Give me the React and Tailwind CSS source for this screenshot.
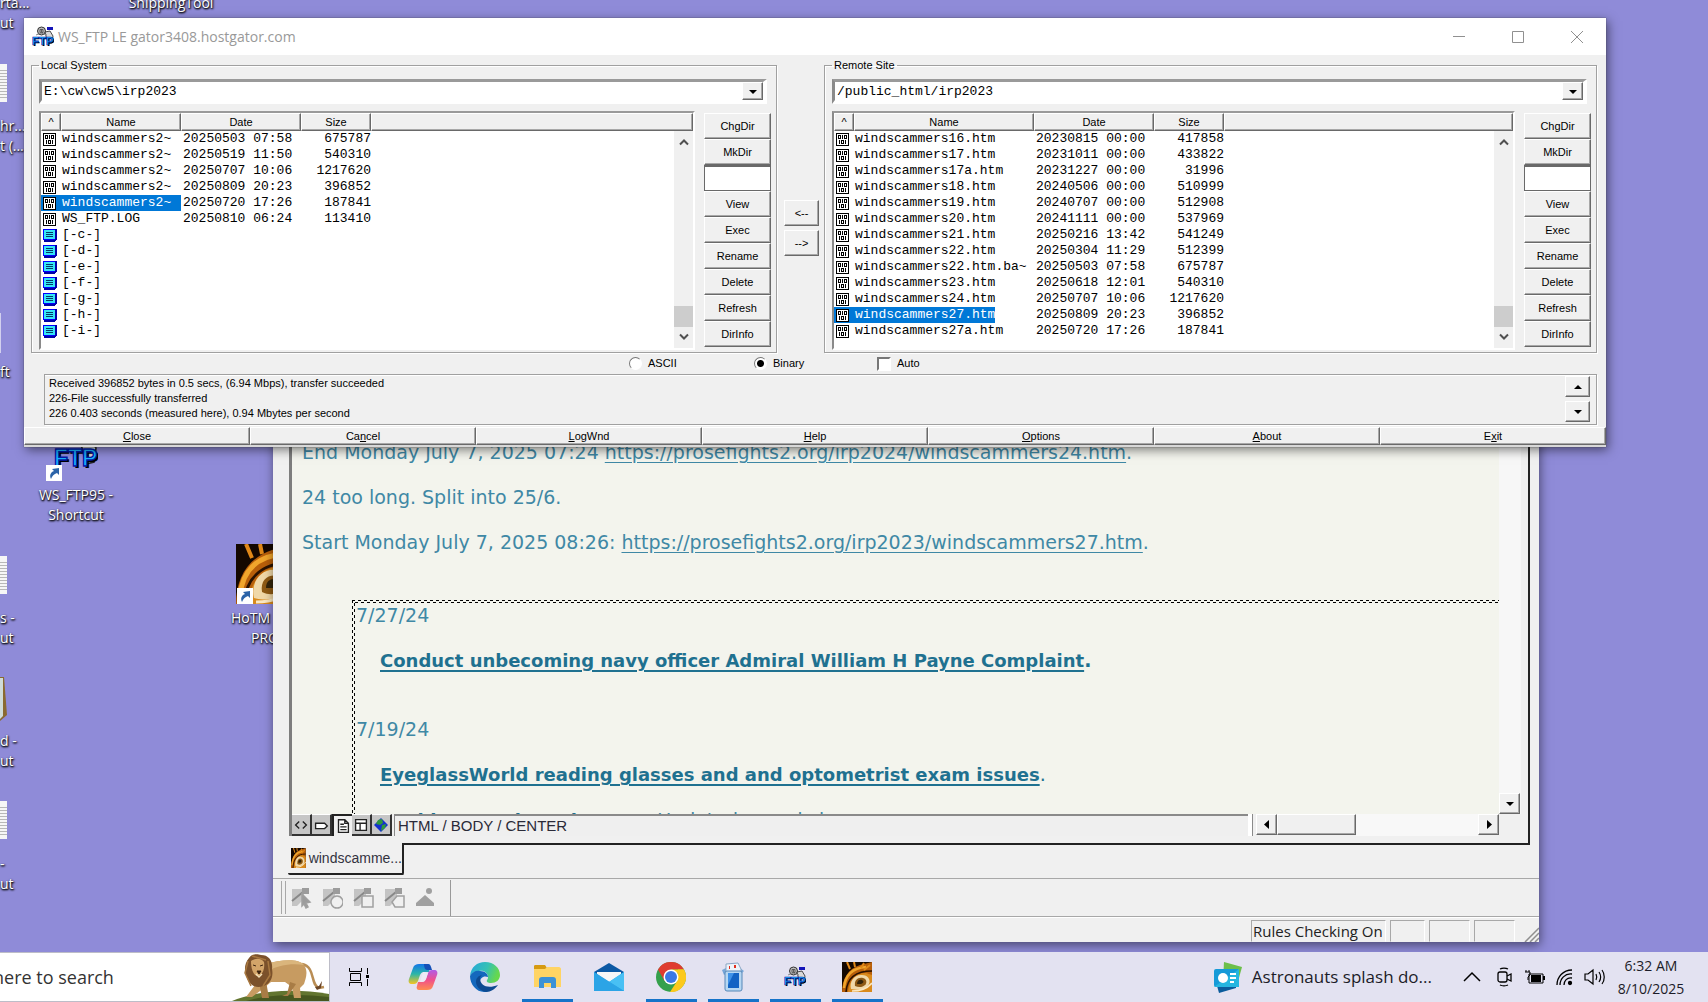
import React from "react";

const ui = "font-['Liberation_Sans',sans-serif] text-[11px] leading-[13px] text-black";
const raised =
  "bg-[#f0f0f0] border border-t-white border-l-white border-r-[#696969] border-b-[#696969]";
const raisedDeep = raised + " shadow-[inset_-1px_-1px_0_#a8a8a8]";

const LOCAL = [
  ["windscammers2~", "20250503 07:58", "675787"],
  ["windscammers2~", "20250519 11:50", "540310"],
  ["windscammers2~", "20250707 10:06", "1217620"],
  ["windscammers2~", "20250809 20:23", "396852"],
  ["windscammers2~", "20250720 17:26", "187841", "full"],
  ["WS_FTP.LOG", "20250810 06:24", "113410"],
  ...["c", "d", "e", "f", "g", "h", "i"].map((d) => [`[-${d}-]`, "", "", "", "drive"]),
];

const REMOTE = [
  ["windscammers16.htm", "20230815 00:00", "417858"],
  ["windscammers17.htm", "20231011 00:00", "433822"],
  ["windscammers17a.htm", "20231227 00:00", "31996"],
  ["windscammers18.htm", "20240506 00:00", "510999"],
  ["windscammers19.htm", "20240707 00:00", "512908"],
  ["windscammers20.htm", "20241111 00:00", "537969"],
  ["windscammers21.htm", "20250216 13:42", "541249"],
  ["windscammers22.htm", "20250304 11:29", "512399"],
  ["windscammers22.htm.ba~", "20250503 07:58", "675787"],
  ["windscammers23.htm", "20250618 12:01", "540310"],
  ["windscammers24.htm", "20250707 10:06", "1217620"],
  ["windscammers27.htm", "20250809 20:23", "396852", "text"],
  ["windscammers27a.htm", "20250720 17:26", "187841"],
];

function FtpLogo({ className }) {
  return (
    <svg className={className} viewBox="0 0 22 22" aria-hidden="true">
      <circle cx="9.500" cy="5" r="4" fill="#b9b9b9" stroke="#333" />
      <path d="M8 3.500h3v3H8zM9.500 3.500v3" fill="none" stroke="#444" strokeWidth=".8" />
      <path d="M15 1h6v3h-6z" fill="#1414b8" />
      <path d="M13 6l5-1 3 5-1 7-4 1z" fill="#d8d8d8" stroke="#222" strokeWidth=".8" />
      <path d="M4 9l5-2 6 2" stroke="#888" fill="none" />
      <text x="1" y="20" fontFamily="Liberation Sans" fontWeight="700" fontSize="11.500" fill="#000">FTP</text>
      <text x="0" y="19" fontFamily="Liberation Sans" fontWeight="700" fontSize="11.500" fill="#19b4ff" stroke="#0018a8" strokeWidth=".7">FTP</text>
    </svg>
  );
}

function Tiger({ className }) {
  return (
    <svg className={className} viewBox="0 0 30 30" preserveAspectRatio="none" aria-hidden="true">
      <rect width="30" height="30" fill="#140800" />
      <path d="M0 30C0 17 6 7 18 3L30 0v30z" fill="#b85f0a" />
      <path d="M2 26C3 14 10 6 24 5" fill="none" stroke="#f0a52c" strokeWidth="2.500" />
      <path d="M4 30C5 17 12 9 30 9" fill="none" stroke="#2a1200" strokeWidth="1.500" />
      <path d="M6 30C7 19 13 11 24 11l6 2v17z" fill="#d98a1c" />
      <path d="M9 27c-2-8 4-15 11-14 6 0 9 5 7 9-2 5-10 7-18 5z" fill="#f0d8a8" />
      <path d="M13 24c-1-6 3-9 8-8 4 1 4 5 2 7-2 2-6 3-10 1z" fill="#8f5a14" />
      <path d="M15 22c0-4 3-5 5-4 2 1 2 3-1 4z" fill="#33240a" />
      <path d="M5 0l3 7M12 0l1 5M22 1l-3 5M28 3l-6 5" stroke="#e08818" strokeWidth="2" />
      <path d="M10 29c8 0 15-2 20-8" stroke="#fbe9c2" strokeWidth="1.500" fill="none" />
    </svg>
  );
}

function BinaryIcon() {
  return (
    <svg className="block h-[13px] w-[13px]" viewBox="0 0 13 13" shapeRendering="crispEdges" aria-hidden="true">
      <rect x=".5" y=".5" width="12" height="12" fill="#fff" stroke="#000" />
      <path d="M2 2h3v4H2zM8 2h3v4H8z" fill="#000" />
      <path d="M3 3h1v2H3zM9 3h1v2H9z" fill="#fff" />
      <path d="M6 2h1v4H6zM3 7h1v4H3zM9 7h1v4H9zM5 7h3v4H5z" fill="#000" />
      <path d="M6 8h1v2H6z" fill="#fff" />
    </svg>
  );
}

function DriveIcon() {
  return (
    <svg className="block h-[13px] w-[14px]" viewBox="0 0 14 13" shapeRendering="crispEdges" aria-hidden="true">
      <path d="M1 2l2-2h11v10l-2 3H1z" fill="#0000a8" />
      <rect x="0" y="0" width="12" height="11" fill="#0000ff" />
      <rect x="1" y="1" width="11" height="9" fill="#35e6f6" />
      <path d="M3 3h7v1H3zM3 5h7v1H3zM3 7h7v1H3z" fill="#003a6a" />
    </svg>
  );
}

function Tri({ dir }) {
  const d = { down: "M1 3h8L5 7z", up: "M1 7h8L5 3z", left: "M7 0v9L2 4.500z", right: "M3 0v9L8 4.500z" }[dir];
  return (
    <svg className="block h-[9px] w-[9px]" viewBox="0 0 9 9" aria-hidden="true">
      <path d={d} fill="#000" />
    </svg>
  );
}

function ScrollChevron({ up }) {
  return (
    <svg className="block h-[8px] w-[12px]" viewBox="0 0 12 8" aria-hidden="true">
      <path d={up ? "M2 6.500l4-4 4 4" : "M2 1.500l4 4 4-4"} fill="none" stroke="#505050" strokeWidth="2" />
    </svg>
  );
}

function FileList({ rows, label, nameCol }) {
  const th = raised + " h-[18px] p-0 text-center align-middle font-normal shadow-[inset_-1px_-1px_0_#a8a8a8]";
  return (
    <div className="relative min-w-0 flex-1 border-2 border-t-[#9a9a9a] border-l-[#8a8a8a] border-r-white border-b-white bg-white pb-[9px]">
      <table aria-label={label} className="w-full table-fixed border-separate border-spacing-0">
        <colgroup>
          <col className="w-[20px]" />
          <col className={nameCol} />
          <col className="w-[120px]" />
          <col className="w-[70px]" />
          <col />
        </colgroup>
        <thead className={ui}>
          <tr>
            <th className={th}>^</th>
            <th className={th}>Name</th>
            <th className={th}>Date</th>
            <th className={th}>Size</th>
            <th className={th} aria-label="Blank" />
          </tr>
        </thead>
        <tbody className="font-['Liberation_Mono',monospace] text-[13px] leading-[16px] text-black">
          {rows.map(([name, date, size, sel, kind], i) => (
            <tr key={i} className="h-[16px] whitespace-nowrap">
              <td className={"py-0 pl-[2px] pr-0 " + (sel ? "bg-[#0078d7]" : "")}>
                {kind ? <DriveIcon /> : <BinaryIcon />}
              </td>
              <td className={"p-0 " + (sel === "full" ? "bg-[#0078d7] text-white" : "")}>
                <span className={sel === "text" ? "block w-fit bg-[#0078d7] pl-px text-white" : "block pl-px"}>{name}</span>
              </td>
              <td className="py-0 pl-[2px] pr-0">{date}</td>
              <td className="p-0 text-right">{size}</td>
              <td className="p-0" />
            </tr>
          ))}
        </tbody>
      </table>
      <div className="absolute top-[18px] right-0 bottom-0 flex w-[19px] flex-col items-center justify-between bg-[#f0f0f0] pt-[7px] pb-[7px]">
        <ScrollChevron up />
        <div className="mt-auto mb-[6px] h-[21px] w-full bg-[#cdcdcd]" />
        <ScrollChevron />
      </div>
    </div>
  );
}

function Site({ title, path, rows, nameCol }) {
  const btn = raisedDeep + " h-[26px] w-full";
  return (
    <fieldset className="min-w-0 border border-[#a0a0a0] px-[7px] pb-[2px] shadow-[1px_1px_0_#fff,inset_1px_1px_0_#fff]">
      <legend className="px-[2px] leading-[14px]">{title}</legend>
      <div className="relative mt-[7px] mr-[2px] border-t-[3px] border-r-[4px] border-b-[4px] border-l-[3px] border-t-[#9a9a9a] border-r-white border-b-white border-l-[#8a8a8a] bg-white">
        <select
          aria-label={title + " directory"}
          className="block h-[18px] w-full appearance-none bg-transparent pt-px pl-[2px] font-['Liberation_Mono',monospace] text-[13px] leading-[17px] text-black"
        >
          <option>{path}</option>
        </select>
        <span className={raisedDeep + " pointer-events-none absolute top-0 right-0 flex h-[18px] w-[21px] items-center justify-center"}>
          <Tri dir="down" />
        </span>
      </div>
      <div className="mt-[7px] flex items-start gap-[9px]">
        <FileList rows={rows} label={title + " files"} nameCol={nameCol} />
        <div className="mr-[-2px] mt-[2px] flex w-[67px] flex-col">
          <button className={btn}>ChgDir</button>
          <button className={btn}>MkDir</button>
          <input
            aria-label={title + " file mask"}
            className="h-[26px] w-full border border-t-2 border-[#696969] bg-white px-1"
          />
          {["View", "Exec", "Rename", "Delete", "Refresh", "DirInfo"].map((b) => (
            <button key={b} className={btn}>{b}</button>
          ))}
        </div>
      </div>
    </fieldset>
  );
}

function FtpWindow() {
  const radio =
    "size-[13px] appearance-none rounded-full border border-t-[#777] border-l-[#777] border-r-white border-b-white bg-white checked:bg-[radial-gradient(circle,#000_0_3px,#fff_4px)]";
  return (
    <section
      aria-label="WS_FTP LE"
      className={ui + " absolute top-[18px] right-[102px] left-[24px] bg-[#f0f0f0] shadow-[0_0_1px_#444,2px_3px_10px_rgba(0,0,0,0.5)]"}
    >
      <header className="flex h-[37px] items-center bg-white pl-[8px]">
        <FtpLogo className="size-[22px]" />
        <h1 className="ml-[4px] font-['Open_Sans',sans-serif] text-[14px] leading-[20px] text-[#999]">
          WS_FTP LE gator3408.hostgator.com
        </h1>
        <div className="ml-auto flex">
          {["M2 7.500h12", "M2.500 2.500h11v11h-11z", "M2 2l12 12M14 2L2 14"].map((d, i) => (
            <button key={d} aria-label={["Minimize", "Maximize", "Close window"][i]} className="flex h-[36px] w-[59px] items-center justify-center">
              <svg className="size-[16px]" viewBox="0 0 16 16" aria-hidden="true">
                <path d={d} fill="none" stroke="#909090" />
              </svg>
            </button>
          ))}
        </div>
      </header>

      <div className="grid grid-cols-[746fr_47px_773fr] pt-[3px] pr-[9px] pl-[7px]">
        <Site title="Local System" path="E:\cw\cw5\irp2023" rows={LOCAL} nameCol="w-[120px]" />
        <div className="flex flex-col gap-[4px] pt-[142px] pr-[5px] pl-[7px]">
          <button aria-label="Download" className={raisedDeep + " h-[26px]"}>&lt;--</button>
          <button aria-label="Upload" className={raisedDeep + " h-[26px]"}>--&gt;</button>
        </div>
        <Site title="Remote Site" path="/public_html/irp2023" rows={REMOTE} nameCol="w-[180px]" />
      </div>

      <div className="flex h-[21px] items-center pl-[605px]">
        <label className="flex w-[125px] items-center gap-[6px]">
          <input type="radio" name="mode" className={radio} />
          ASCII
        </label>
        <label className="flex w-[123px] items-center gap-[6px]">
          <input type="radio" name="mode" defaultChecked className={radio} />
          Binary
        </label>
        <label className="flex items-center gap-[6px]">
          <input
            type="checkbox"
            className="size-[14px] appearance-none border-2 border-t-[#777] border-l-[#777] border-r-white border-b-white bg-white"
          />
          Auto
        </label>
      </div>

      <div className="mr-[9px] ml-[20px] flex justify-between border border-[#a0a0a0] shadow-[inset_0_1px_0_#fff,1px_1px_0_#fff]">
        <div role="log" className="pt-px pb-[3px] pl-[4px] leading-[15px]">
          <p>Received 396852 bytes in 0.5 secs, (6.94 Mbps), transfer succeeded</p>
          <p>226-File successfully transferred</p>
          <p>226 0.403 seconds (measured here), 0.94 Mbytes per second</p>
        </div>
        <div className="flex flex-col gap-[4px] pt-px pr-[6px]">
          <button aria-label="Scroll up" className={raisedDeep + " flex h-[21px] w-[25px] items-center justify-center"}><Tri dir="up" /></button>
          <button aria-label="Scroll down" className={raisedDeep + " flex h-[21px] w-[25px] items-center justify-center"}><Tri dir="down" /></button>
        </div>
      </div>

      <div className="mt-[2px] grid grid-cols-7 border-b-2 border-[#d8d8d8]">
        {[["", "C", "lose"], ["Ca", "n", "cel"], ["", "L", "ogWnd"], ["", "H", "elp"], ["", "O", "ptions"], ["", "A", "bout"], ["E", "x", "it"]].map(([a, k, b]) => (
          <button key={a + k + b} className={raisedDeep + " h-[18px]"}>
            {a}<u>{k}</u>{b}
          </button>
        ))}
      </div>
    </section>
  );
}

const VIEWS = [
  ["Source", "M7 6l-4 4 4 4M11 6l4 4-4 4"],
  ["Tags", "M3 8h10l3 3-3 3H3z"],
  ["Page", "M4 3h7l4 4v10H4zM11 3v4h4M6 8h4M6 11h7M6 14h7"],
  ["Frames", "M3 4h12v12H3zM3 8h12M8 8v8"],
];

function EditorWindow() {
  const cell = "h-[22px] border border-t-[#a8a8a8] border-l-[#a8a8a8] border-r-white border-b-transparent";
  const sb = raisedDeep + " flex h-[21px] w-[21px] shrink-0 items-center justify-center";
  const link = "text-[18px] font-bold underline decoration-2 underline-offset-[3px]";
  return (
    <section
      aria-label="HTML editor"
      className="absolute right-[169px] bottom-[60px] left-[273px] flex h-[522px] flex-col bg-[#f0f0f0] shadow-[1px_3px_10px_rgba(0,0,0,0.5)]"
    >
      <div className="mr-[9px] ml-[16px] flex min-h-0 flex-1 flex-col border-r-2 border-b-2 border-[#222] pr-[7px] pb-[7px]">
        <div className="flex min-h-0 flex-1 border-l-[3px] border-[#7d7d7d]">
          <div className="min-w-0 flex-1 overflow-hidden bg-[#f3f4ed] pl-[10px] font-['DejaVu_Sans',sans-serif] text-[19px] leading-[24px] whitespace-nowrap text-[#3f88a5]">
            <p className="mt-[20px]">
              End Monday July 7, 2025 07:24{" "}
              <a href="#24" className="underline underline-offset-[3px]">https://prosefights2.org/irp2024/windscammers24.htm</a>.
            </p>
            <p className="mt-[21px]">24 too long. Split into 25/6.</p>
            <p className="mt-[21px]">
              Start Monday July 7, 2025 08:26:{" "}
              <a href="#27" className="underline underline-offset-[3px]">https://prosefights2.org/irp2023/windscammers27.htm</a>.
            </p>
            <div className="mt-[46px] ml-[50px] pt-[3px] pl-[4px] [background:linear-gradient(90deg,#000_50%,transparent_50%)_0_0/6px_1px_repeat-x,linear-gradient(90deg,#000_50%,transparent_50%)_3px_2px/6px_1px_repeat-x,linear-gradient(#000_50%,transparent_50%)_0_0/1px_6px_repeat-y,linear-gradient(#000_50%,transparent_50%)_2px_3px/1px_6px_repeat-y]">
              <p>7/27/24</p>
              <p className="mt-[21px] ml-[24px] font-bold text-[#1f7190]">
                <a href="#payne" className={link}>Conduct unbecoming navy officer Admiral William H Payne Complaint</a>.
              </p>
              <p className="mt-[44px]">7/19/24</p>
              <p className="mt-[21px] ml-[24px] text-[#1f7190]">
                <a href="#eyeglass" className={link}>EyeglassWorld reading glasses and and optometrist exam issues</a>.
              </p>
              <p className="mt-[21px] ml-[24px]">
                <b className="text-[18px] text-[#1f7190]">Usable to update changes.</b> Updated award changes.
              </p>
            </div>
          </div>
          <div className="flex w-[22px] flex-col justify-end bg-[#f7f7f7]">
            <button aria-label="Scroll down" className={sb}><Tri dir="down" /></button>
          </div>
        </div>
        <div className="flex h-[22px] shrink-0 items-stretch border-l-[3px] border-[#7d7d7d]">
          {VIEWS.map(([name, d], i) => (
            <button
              key={name}
              aria-label={name}
              className={
                i === 2
                  ? "flex w-[20px] items-center justify-center border-t-2 border-l-2 border-[#222] bg-[#f0f0f0]"
                  : "flex w-[20px] items-center justify-center border-t border-r-2 border-b-2 border-t-white border-r-[#333] border-b-[#333] bg-[#c6c6c6]"
              }
            >
              <svg className="size-[18px]" viewBox="0 0 18 20" aria-hidden="true">
                <path d={d} fill={i ? "#fff" : "none"} stroke="#222" strokeWidth="1.500" />
              </svg>
            </button>
          ))}
          <button aria-label="Preview" className="flex w-[20px] items-center justify-center border-t border-r-2 border-b-2 border-t-white border-r-[#333] border-b-[#333] bg-[#c6c6c6]">
            <svg className="size-[14px]" viewBox="0 0 14 14" aria-hidden="true">
              <path d="M7 0l7 7-7 7-7-7z" fill="#1431d0" />
              <path d="M4 2l4-1 1 4-3 2-4-1zM8 7l4-1-1 4-4 3z" fill="#2f9a3c" />
            </svg>
          </button>
          <div className="ml-[2px] flex-1 border-t-2 border-l border-[#8a8a8a] bg-[#efefef] pl-[3px] font-['Liberation_Sans',sans-serif] text-[15px] leading-[20px] text-[#2a2a38]">
            HTML / BODY / CENTER
          </div>
          <div className="mr-[3px] w-[5px] border-r border-[#8a8a8a] bg-white" />
          <button aria-label="Scroll left" className={sb}><Tri dir="left" /></button>
          <div className={raisedDeep + " h-[21px] w-[79px]"} />
          <div className="w-[122px] bg-[#f8f8f8]" />
          <button aria-label="Scroll right" className={sb}><Tri dir="right" /></button>
          <div className="w-[22px]" />
        </div>
      </div>

      <div className="flex h-[34px] shrink-0 items-start border-b border-[#a8a8a8] pl-[15px]">
        <button className="mt-[-2px] flex h-[32px] w-[116px] items-center gap-[3px] rounded-b-[2px] border-r-2 border-b-2 border-[#222] bg-[#f0f0f0] pl-[3px] font-['Liberation_Sans',sans-serif] text-[14px] leading-[16px] text-[#33333f]">
          <Tiger className="size-[20px]" />
          windscamme...
        </button>
      </div>
      <div className="flex h-[38px] shrink-0 items-center border-b border-[#a8a8a8] pl-[5px]">
        <div className="h-[33px] w-[4px] border-r border-[#a8a8a8]" />
        <div className="mr-[5px] h-[33px] w-[4px] border-r border-[#a8a8a8]" />
        {[
          ["Select", "M11 7l8 8-4 1 2 4-2 1-2-4-2 2z"],
          ["Circle", "M15 9a6 6 0 1 0 .01 0z"],
          ["Rectangle", "M9 9h11v11H9z"],
          ["Polygon", "M13 9h7v11H11l-3-5z"],
        ].map(([n, d], i) => (
          <button key={n} aria-label={n} disabled className="mr-[10px] h-[22px] w-[21px]">
            <svg viewBox="0 0 21 22" aria-hidden="true">
              <path d="M1 2h12v10L6 19H1z" fill="#c4c4c4" />
              <path d="M1 14L12 5" stroke="#888" strokeWidth="2" />
              <rect x="11" y="1" width="7" height="6" fill="#9c9c9c" />
              <path d={d} fill={i ? "#f0f0f0" : "#9c9c9c"} stroke="#a0a0a0" strokeWidth="1.500" />
            </svg>
          </button>
        ))}
        <button aria-label="Image" disabled className="mr-[14px] h-[22px] w-[21px]">
          <svg viewBox="0 0 21 22" aria-hidden="true">
            <circle cx="14" cy="4" r="3" fill="#a0a0a0" />
            <path d="M1 16l9-8 9 8v3H1z" fill="#a0a0a0" />
          </svg>
        </button>
        <div className="h-[36px] w-px bg-[#999]" />
      </div>
      <footer className="flex h-[25px] shrink-0 items-end justify-end gap-[4px] border-t border-white">
        <span className={cell + " w-[135px] pl-px font-['Open_Sans',sans-serif] text-[15px] leading-[20px] text-[#222]"}>Rules Checking On</span>
        <span className={cell + " w-[35px]"} />
        <span className={cell + " w-[41px]"} />
        <span className={cell + " w-[41px]"} />
        <svg className="ml-[5px] size-[15px]" viewBox="0 0 15 15" aria-hidden="true">
          <path d="M1 15L15 1M6 15l9-9M11 15l4-4" stroke="#8f8f8f" strokeWidth="1.500" />
        </svg>
      </footer>
    </section>
  );
}

function Lion() {
  return (
    <svg className="h-[48px] w-[97px]" viewBox="0 0 97 48" aria-hidden="true">
      <path d="M0 48c20-9 58-14 97-7v7z" fill="#62752f" />
      <path d="M14 48c20-6 50-8 83-4v4z" fill="#46571f" />
      <path d="M70 11c14 3 8 21 17 24l5-1" fill="none" stroke="#b98d54" strokeWidth="2.500" />
      <path d="M83 34l4-1 3-5-1 7-4 2z" fill="#6b4526" />
      <path d="M34 11c14-4 32-6 38 1 5 7 1 15 0 19l-4 4 1 10h-7l-2-11-7-5-14 0-7 6-12 9h-6l9-12z" fill="#c79b61" />
      <path d="M58 29l-3 12-5 2h6l8-12zM34 28l3 17h-7l-3-16z" fill="#a87c45" />
      <path d="M34 11c14-4 32-6 38 1-12-2-26 0-36 6z" fill="#dab57c" />
      <path d="M17 5c3-5 9-4 12-3 8 0 12 6 11 14 2 9-3 16-9 17-8 3-14-2-16-8-3-7-3-14 2-20z" fill="#7b512b" />
      <path d="M16 8l-3 12 6 13M36 8l2 14-7 11M20 3l14 4" fill="none" stroke="#a87840" strokeWidth="1.500" />
      <path d="M19 8c4-3 10-3 13 1 1 6-1 12-5 14-5 1-8-6-8-15z" fill="#d3a569" />
      <path d="M21 12l3 1M28 13l3-1M25 18h4l-2 3z" stroke="#3d2411" fill="#3d2411" />
      <path d="M24 21l3 3 3-3" stroke="#f4e2bc" strokeWidth="1.500" fill="none" />
    </svg>
  );
}

const APPS = [
  ["Copilot", false, (
    <svg viewBox="0 0 30 30">
      <defs>
        <linearGradient id="ca" x1="0" y1="0" x2="0" y2="1"><stop offset="0" stopColor="#1476e8" /><stop offset=".5" stopColor="#2bb6a8" /><stop offset="1" stopColor="#f5c520" /></linearGradient>
        <linearGradient id="cb" x1="0" y1="0" x2="0" y2="1"><stop offset="0" stopColor="#b05be8" /><stop offset=".5" stopColor="#f0508c" /><stop offset="1" stopColor="#ff8c50" /></linearGradient>
      </defs>
      <path d="M11 2h9c2 0 3 2 2 4l-1 4h-5c-2 0-3 1-4 3l-2 6c-1 2-2 3-4 3H4c-3 0-4-2-3-5l4-11c1-3 3-4 6-4z" fill="url(#ca)" />
      <path d="M19 28h-8c-2 0-3-2-2-4l1-4h4c2 0 3-1 4-3l2-6c1-2 2-3 4-3h2c3 0 4 2 3 5l-4 11c-1 3-3 4-6 4z" fill="url(#cb)" />
      <path d="M17 10h-2l-3 10h2c2 0 3-1 4-3l2-6z" fill="#eceaf6" />
      <path d="M16 2h4c2 0 3 2 4 6h-5c-2 0-3-3-3-6z" fill="#1550b8" />
    </svg>
  )],
  ["Edge", false, (
    <svg viewBox="0 0 30 30">
      <defs>
        <linearGradient id="ea" x1="0" y1="0" x2="1" y2=".3"><stop offset="0" stopColor="#25a5dd" /><stop offset=".6" stopColor="#35c1b4" /><stop offset="1" stopColor="#66d84e" /></linearGradient>
      </defs>
      <path d="M0 14C1 5 7 0 15 0c9 0 15 6 15 13 0 5-4 8-9 8-3 0-5-1-4-3 1-1 1-2 1-4-1-4-5-6-9-5-5 0-8 3-9 5z" fill="url(#ea)" />
      <path d="M0 14c2-4 6-6 10-5 5 0 8 3 8 6-5-2-9 2-8 7 1 4 5 7 9 7-10 4-19-5-19-15z" fill="#1468bd" />
      <path d="M10 16c0 8 8 11 18 7-3 4-7 7-12 7-6-1-10-6-10-10 0-4 2-6 6-7-1 1-2 2-2 3z" fill="#0d4a91" />
    </svg>
  )],
  ["File Explorer", true, (
    <svg viewBox="0 0 30 30">
      <path d="M2 4c0-1 1-1 2-1h9l2 3-2 3H2z" fill="#d69a12" />
      <path d="M2 7h11l2-2h12c1 0 2 1 2 2v18H2z" fill="#ffd464" />
      <path d="M7 26v-8c0-2 1-3 3-3h11c2 0 3 1 3 3v8h-5v-5h-7v5z" fill="#3c91d6" />
    </svg>
  )],
  ["Mail", false, (
    <svg viewBox="0 0 30 30">
      <path d="M0 10L15 1l15 9v4H0z" fill="#0c59a4" />
      <path d="M3 10h24v6l-12 7L3 16z" fill="#f7f7f7" />
      <path d="M0 10l15 10L30 10v19H0z" fill="#27a8ea" />
      <path d="M15 20L30 10v19z" fill="#48c0f4" />
      <path d="M0 10l30 19H0z" fill="#2ba4e6" />
    </svg>
  )],
  ["Chrome", true, (
    <svg viewBox="0 0 30 30">
      <circle cx="15" cy="15" r="15" fill="#34a04c" />
      <path d="M2 7.500A15 15 0 0 1 28 7.500H15L8.500 19z" fill="#df3c30" />
      <path d="M28 7.500A15 15 0 0 1 14 30l7.500-11.500L22 7.500z" fill="#fcc91c" />
      <path d="M15 7.500h13l-6 4z" fill="#fcc91c" />
      <circle cx="15" cy="15" r="7.500" fill="#fff" />
      <circle cx="15" cy="15" r="6" fill="#3b78e6" />
    </svg>
  )],
  ["Notes", true, (
    <svg viewBox="0 0 30 30">
      <path d="M4 8l4-2 1 5-3 2zM22 6l4 3-3 3z" fill="#76a6d8" />
      <path d="M8 2l12-1 3 6v4H8z" fill="#eef4fa" stroke="#8aa6c4" />
      <path d="M11 4h1v3h-1zM16 3h2v3h-2z" fill="#e03020" />
      <rect x="7" y="9" width="17" height="20" rx="2" fill="#b6d7f2" stroke="#5787b8" />
      <rect x="10" y="11" width="11" height="15" fill="#1263c4" />
      <path d="M10 11h6l-6 12z" fill="#3f92e8" />
    </svg>
  )],
  ["WS_FTP", true, <FtpLogo className="m-[4px] size-[22px]" />],
  ["HoTMetaL PRO", true, <Tiger className="size-[30px]" />],
];

function Taskbar() {
  return (
    <nav aria-label="Taskbar" className="absolute inset-x-0 bottom-0 flex h-[50px] items-center bg-[#e3e2f1] text-[#1c1c28]">
      <div className="flex h-full w-[330px] shrink-0 items-center overflow-hidden border-y border-r border-[#bdbdc8] bg-white">
        <input
          aria-label="Search"
          placeholder="here to search"
          className="ml-[-7px] w-[239px] font-['Open_Sans',sans-serif] text-[18px] leading-[24px] placeholder:text-[#333]"
        />
        <Lion />
      </div>
      <button aria-label="Task View" className="flex h-full w-[62px] items-center pl-[19px]">
        <svg className="size-[20px]" viewBox="0 0 20 20" fill="none" stroke="#000" aria-hidden="true">
          <path d="M.5 1v3.500h12V1M.5 19v-3.500h12V19M1.500 6.500h10v7h-10zM18.500 1v6M18.500 12v7" />
          <path d="M17 8h3v3h-3z" fill="#000" stroke="none" />
        </svg>
      </button>
      {APPS.map(([name, open, icon]) => (
        <button key={name} aria-label={name} className="flex h-full w-[62px] flex-col items-center">
          <span className="mt-[10px] size-[30px]">{icon}</span>
          {open && <span className="mt-auto h-[3px] w-[51px] bg-[#1673c9]" />}
        </button>
      ))}
      <button className="ml-auto flex items-center gap-[9px] font-['Open_Sans',sans-serif] text-[17px] leading-[24px]">
        <svg className="size-[32px]" viewBox="0 0 32 32" aria-hidden="true">
          <path d="M13 1l18 5-5 18-14-4z" fill="#6cbf4b" />
          <path d="M3 14l5 18 17-5V10z" fill="#0b5c9c" />
          <rect x="3" y="8" width="25" height="18" rx="2" fill="#169ad8" />
          <path d="M3 26l25-18v18z" fill="#25b6e0" />
          <circle cx="12" cy="17" r="5" fill="#fff" />
          <path d="M19 13h6M19 17h6M19 21h4" stroke="#fff" strokeWidth="2" />
        </svg>
        <span>Astronauts splash do...</span>
      </button>
      <div className="ml-[31px] flex items-center gap-[11px] text-black">
        <svg className="mr-[5px] h-[16px] w-[18px]" viewBox="0 0 18 16" fill="none" stroke="currentColor" strokeWidth="1.500" aria-hidden="true"><path d="M1 12l8-8 8 8" /></svg>
        <svg className="h-[20px] w-[16px]" viewBox="0 0 16 20" fill="none" stroke="currentColor" strokeWidth="1.300" aria-hidden="true"><rect x="1" y="5" width="9" height="10" rx="2" /><path d="M10 9l4-2v7l-4-2M3 2c2-1 6-1 8 0M3 18c2 1 6 1 8 0" /></svg>
        <svg className="h-[14px] w-[21px]" viewBox="0 0 21 14" aria-hidden="true"><path d="M5 4h14v9H5z" fill="none" stroke="#000" /><path d="M7 5h10v7H7zM19 6h2v4h-2z" /><path d="M1 2h5v3L4 7v3M2 0v2M5 0v2" fill="none" stroke="#000" /></svg>
        <svg className="size-[17px]" viewBox="0 0 17 17" fill="none" stroke="currentColor" strokeWidth="1.300" aria-hidden="true"><path d="M1 16C1 8 7 1 16 1M4 16C4 10 9 4 16 5M8 16c0-4 3-8 8-7" /><circle cx="14" cy="14" r="1.500" fill="#000" /></svg>
        <svg className="h-[18px] w-[21px]" viewBox="0 0 21 18" fill="none" stroke="currentColor" strokeWidth="1.200" aria-hidden="true"><path d="M1 6h3l5-4v14l-5-4H1zM12 6c1 2 1 4 0 6M15 4c2 3 2 7 0 10M18 2c3 4 3 10 0 14" /></svg>
      </div>
      <div className="mr-[19px] ml-[8px] w-[76px] text-center font-['Open_Sans',sans-serif] text-[14px] leading-[23px]">
        <div>6:32 AM</div>
        <div>8/10/2025</div>
      </div>
    </nav>
  );
}

const label =
  "absolute font-['Open_Sans',sans-serif] text-[14px] leading-[20px] whitespace-pre-line text-white [text-shadow:1px_1px_2px_#000,0_1px_2px_#000]";

function Shortcut({ className }) {
  return (
    <svg className={"absolute size-[16px] " + className} viewBox="0 0 16 16" aria-hidden="true">
      <path d="M0 0h16v16H0z" fill="#fff" />
      <path d="M5 14c-2-4 0-7 3-8L6 4l7-1v7l-2-2c-3 1-5 3-6 6z" fill="#2b63a8" />
    </svg>
  );
}

function Page({ className }) {
  return (
    <div
      className={
        "absolute left-0 h-[38px] w-[7px] border-y-4 border-[#f6f6f6] bg-[repeating-linear-gradient(#f6f6f6_0_2px,#b8b8b8_2px_3px)] " + className
      }
    />
  );
}

function DesktopIcons() {
  return (
    <div>
      <div className={label + " top-[-7px] left-0"}>{"rta...\nut"}</div>
      <div className={label + " top-[-7px] left-[121px] w-[100px] text-center"}>ShippingTool</div>
      <Page className="top-[64px]" />
      <div className={label + " top-[116px] left-0"}>{"hr...\nt (..."}</div>
      <div className="absolute top-[313px] left-0 h-[40px] w-px bg-white/60" />
      <div className={label + " top-[362px] left-0"}>ft</div>

      <FtpLogo className="absolute top-[428px] left-[54px] size-[44px]" />
      <Shortcut className="top-[465px] left-[46px]" />
      <div className={label + " top-[485px] left-[26px] w-[100px] text-center"}>{"WS_FTP95 -\nShortcut"}</div>

      <Tiger className="absolute top-[544px] left-[236px] size-[60px]" />
      <Shortcut className="top-[588px] left-[237px]" />
      <div className={label + " top-[608px] left-[231px]"}>HoTM</div>
      <div className={label + " top-[628px] left-[251px]"}>PRO</div>

      <Page className="top-[556px]" />
      <div className={label + " top-[608px] left-0"}>{"s -\nut"}</div>
      <svg className="absolute top-[677px] left-0 h-[44px] w-[7px]" viewBox="0 0 7 44" aria-hidden="true">
        <path d="M0 0h4l3 38-7 6z" fill="#8a6a30" />
        <path d="M0 1h3v38l-3 3z" fill="#cfdcd8" />
      </svg>
      <div className={label + " top-[731px] left-0"}>{"d -\nut"}</div>
      <Page className="top-[801px]" />
      <div className={label + " top-[854px] left-0"}>{"- \nut"}</div>
    </div>
  );
}

export default function App() {
  return (
    <main className="relative h-screen w-full overflow-hidden bg-[#8f8bd8]">
      <DesktopIcons />
      <EditorWindow />
      <FtpWindow />
      <Taskbar />
    </main>
  );
}
